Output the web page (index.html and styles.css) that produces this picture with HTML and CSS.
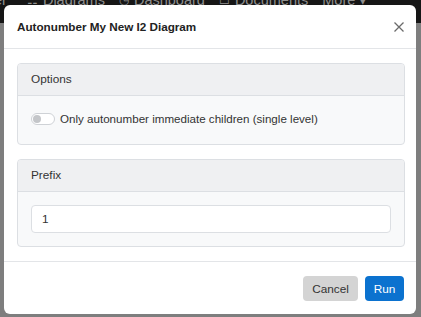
FILE: index.html
```html
<!DOCTYPE html>
<html>
<head>
<meta charset="utf-8">
<link rel="stylesheet" href="styles.css">
</head>
<body>
<div class="page">
  <nav class="navbar">
    <span class="nav-item nav-first">er</span>
    <span class="nav-item"><span class="nav-icon">&#x2637;</span>Diagrams</span>
    <span class="nav-item"><span class="nav-icon">&#x25F7;</span>Dashboard</span>
    <span class="nav-item"><span class="nav-icon">&#x2610;</span>Documents</span>
    <span class="nav-item">More &#x25BE;</span>
  </nav>
  <div class="page-body"></div>
</div>

<div class="modal">
  <div class="modal-header">
    <h5 class="modal-title">Autonumber My New I2 Diagram</h5>
    <svg class="close" width="10" height="10" viewBox="0 0 10 10"><path d="M0.5 0.5 L9.5 9.5 M9.5 0.5 L0.5 9.5" stroke="#6b6b6b" stroke-width="1.3" fill="none"/></svg>
  </div>
  <div class="modal-body">
    <div class="card">
      <div class="card-header">Options</div>
      <div class="card-body options-body">
        <span class="switch"><span class="knob"></span></span>
        <span class="label">Only autonumber immediate children (single level)</span>
      </div>
    </div>
    <div class="card">
      <div class="card-header">Prefix</div>
      <div class="card-body prefix-body">
        <div class="input">1</div>
      </div>
    </div>
  </div>
  <div class="modal-footer">
    <button class="btn btn-cancel">Cancel</button>
    <button class="btn btn-run">Run</button>
  </div>
</div>
</body>
</html>
```

FILE: styles.css
```css
html, body {
  margin: 0;
  padding: 0;
}
body {
  width: 421px;
  height: 317px;
  overflow: hidden;
  background: #7e7e7e;
  font-family: "Liberation Sans", Arial, sans-serif;
  color: #333;
  position: relative;
}
.page {
  height: 317px;
  display: flex;
  flex-direction: column;
}
.navbar {
  height: 23px;
  background: #161616;
  display: flex;
  gap: 14px;
  align-items: flex-start;
  overflow: hidden;
}
.nav-item {
  color: #8f8f8f;
  font-size: 14.5px;
  line-height: 15px;
  margin-top: -7px;
  white-space: nowrap;
  display: flex;
  gap: 5px;
}
.nav-first {
  margin-left: -6px;
  margin-right: 6px;
}
.nav-icon {
  font-size: 12px;
}
.page-body {
  flex: 1;
  background: #7e7e7e;
}

.modal {
  position: absolute;
  left: 4px;
  top: 5px;
  width: 412px;
  height: 309px;
  background: #fff;
  border-radius: 6px;
  display: flex;
  flex-direction: column;
  box-sizing: border-box;
}
.modal-header {
  height: 44px;
  box-sizing: border-box;
  border-bottom: 1px solid #e3e5e8;
  display: flex;
  align-items: center;
  justify-content: space-between;
  padding: 0 12px 0 13px;
}
.modal-title {
  margin: 0;
  font-size: 11.7px;
  font-weight: bold;
  color: #222;
  line-height: 16px;
}
.close {
  display: block;
  margin-top: 1px;
}
.modal-body {
  padding: 14px 11px 14px 13px;
  display: flex;
  flex-direction: column;
  gap: 14px;
  border-bottom: 1px solid #e3e5e8;
}
.card {
  border: 1px solid #dcdfe3;
  border-radius: 4px;
  background: #f8f9fa;
  overflow: hidden;
}
.card-header {
  height: 31px;
  background: #eff0f2;
  border-bottom: 1px solid #dcdfe3;
  padding: 0 13px;
  font-size: 11.8px;
  line-height: 31px;
  color: #333;
}
.options-body {
  height: 48px;
  display: flex;
  align-items: center;
  padding: 0 13px;
  gap: 5px;
}
.switch {
  width: 20px;
  height: 10px;
  border: 1px solid #cfd2d6;
  border-radius: 6px;
  background: #fff;
  display: flex;
  align-items: center;
  padding: 0 1px;
  margin-top: -2px;
}
.knob {
  width: 8px;
  height: 8px;
  border-radius: 50%;
  background: #c4c6c9;
}
.label {
  font-size: 11.6px;
  color: #333;
  margin-top: -3px;
}
.prefix-body {
  padding: 13px;
}
.input {
  height: 26px;
  border: 1px solid #dcdfe3;
  border-radius: 4px;
  background: #fff;
  padding: 0 10px;
  font-size: 11.8px;
  line-height: 26px;
  color: #333;
}
.modal-footer {
  flex: 1;
  display: flex;
  justify-content: flex-end;
  align-items: flex-start;
  padding: 14px 12px 0 0;
  gap: 7px;
}
.btn {
  height: 25px;
  border: none;
  border-radius: 4px;
  font-family: "Liberation Sans", Arial, sans-serif;
  font-size: 11.8px;
  padding: 0;
  margin: 0;
}
.btn-cancel {
  width: 55px;
  background: #d4d4d4;
  color: #333;
}
.btn-run {
  width: 39px;
  background: #0b72cf;
  color: #fff;
}
```
